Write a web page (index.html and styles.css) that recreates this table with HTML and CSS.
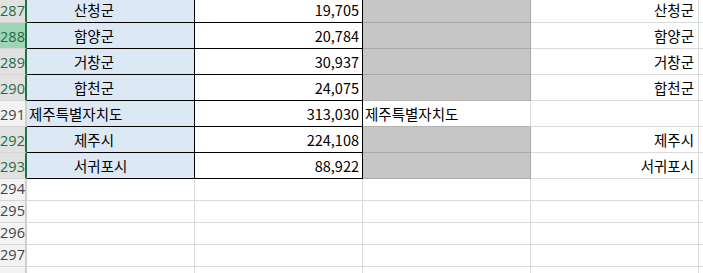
FILE: index.html
```html
<!DOCTYPE html>
<html lang="ko">
<head>
<meta charset="utf-8">
<link rel="stylesheet" href="styles.css">
</head>
<body>
<div class="sheet">
  <div class="row tall">
    <div class="hd sel">287</div>
    <div class="c a sub">산청군</div>
    <div class="c b num">19,705</div>
    <div class="c g"></div>
    <div class="c d">산청군</div>
    <div class="c e"></div>
  </div>
  <div class="row tall">
    <div class="hd sel act">288</div>
    <div class="c a sub">함양군</div>
    <div class="c b num">20,784</div>
    <div class="c g"></div>
    <div class="c d">함양군</div>
    <div class="c e"></div>
  </div>
  <div class="row tall">
    <div class="hd sel">289</div>
    <div class="c a sub">거창군</div>
    <div class="c b num">30,937</div>
    <div class="c g"></div>
    <div class="c d">거창군</div>
    <div class="c e"></div>
  </div>
  <div class="row tall">
    <div class="hd sel">290</div>
    <div class="c a sub">합천군</div>
    <div class="c b num">24,075</div>
    <div class="c g last"></div>
    <div class="c d">합천군</div>
    <div class="c e"></div>
  </div>
  <div class="row tall">
    <div class="hd">291</div>
    <div class="c a">제주특별자치도</div>
    <div class="c b num">313,030</div>
    <div class="c w">제주특별자치도</div>
    <div class="c d"></div>
    <div class="c e"></div>
  </div>
  <div class="row tall">
    <div class="hd sel">292</div>
    <div class="c a sub">제주시</div>
    <div class="c b num">224,108</div>
    <div class="c g"></div>
    <div class="c d">제주시</div>
    <div class="c e"></div>
  </div>
  <div class="row tall">
    <div class="hd sel">293</div>
    <div class="c a sub">서귀포시</div>
    <div class="c b num">88,922</div>
    <div class="c g"></div>
    <div class="c d">서귀포시</div>
    <div class="c e"></div>
  </div>
  <div class="row short">
    <div class="hd">294</div>
    <div class="c"></div><div class="c"></div><div class="c"></div><div class="c"></div><div class="c e"></div>
  </div>
  <div class="row short">
    <div class="hd">295</div>
    <div class="c"></div><div class="c"></div><div class="c"></div><div class="c"></div><div class="c e"></div>
  </div>
  <div class="row short">
    <div class="hd">296</div>
    <div class="c"></div><div class="c"></div><div class="c"></div><div class="c"></div><div class="c e"></div>
  </div>
  <div class="row short">
    <div class="hd">297</div>
    <div class="c"></div><div class="c"></div><div class="c"></div><div class="c"></div><div class="c e"></div>
  </div>
  <div class="row short">
    <div class="hd"></div>
    <div class="c"></div><div class="c"></div><div class="c"></div><div class="c"></div><div class="c e"></div>
  </div>
</div>
</body>
</html>
```

FILE: styles.css
```css
html, body {
  margin: 0;
  padding: 0;
  background: #ffffff;
  overflow: hidden;
}

.sheet {
  margin-top: -3px;
  width: 703px;
  height: 276px;
  overflow: hidden;
  font-family: "Noto Sans CJK KR", "Noto Sans", sans-serif;
  font-size: 14.5px;
  color: #000;
}

.row {
  display: flex;
}

.row.tall { height: 26px; }
.row.short { height: 22px; }

.hd {
  box-sizing: border-box;
  width: 27px;
  flex: none;
  background: #f3f3f3;
  border-right: 2px solid #d0d0d0;
  border-bottom: 1px solid #d6d6d6;
  font-family: "Open Sans", "Noto Sans", sans-serif;
  font-size: 14.5px;
  color: #444;
  display: flex;
  align-items: flex-end;
  justify-content: center;
  line-height: 20px;
  padding-bottom: 1px;
  overflow: hidden;
  white-space: nowrap;
}

.hd.sel {
  background: #e1e1e1;
  color: #1f6e43;
  border-right-color: #217346;
}

.hd.act {
  background: #9fd5b7;
}

.c {
  box-sizing: border-box;
  width: 168px;
  flex: none;
  border-right: 1px solid #dadada;
  border-bottom: 1px solid #dadada;
  display: flex;
  align-items: flex-end;
  line-height: 20px;
  padding: 0 2px 2px 2px;
  white-space: nowrap;
}

.c.e {
  flex: 1 1 auto;
  width: auto;
  min-width: 0;
}

.c.a {
  background: #dde8f5;
  border-right-color: #000;
  border-bottom-color: #000;
  padding-left: 2px;
}

.c.a.sub {
  padding-left: 47px;
}

.c.b {
  border-right-color: #000;
  border-bottom-color: #000;
  justify-content: flex-end;
  padding-right: 3px;
}

.c.g {
  background: #c6c6c6;
  border-right: 1px solid #a8a8a8;
  border-bottom: 1px solid #a8a8a8;
}

.c.g.last {
  border-bottom-color: #b4b4b4;
}

.c.w {
  border-bottom-color: #b4b4b4;
  padding-left: 2px;
}

.c.d {
  justify-content: flex-end;
  padding-right: 4px;
}
```
